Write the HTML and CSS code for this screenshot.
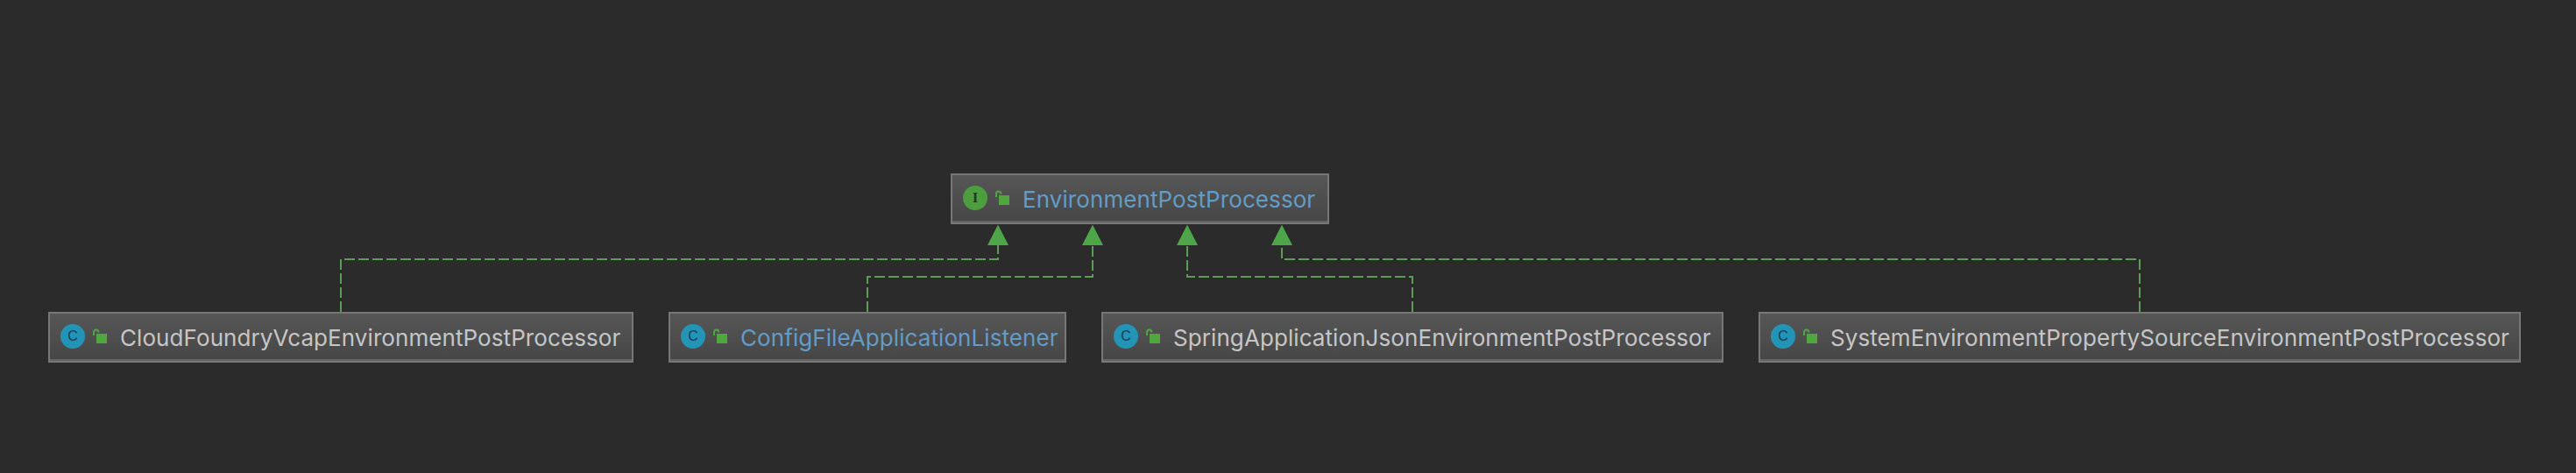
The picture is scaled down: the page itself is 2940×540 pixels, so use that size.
FILE: index.html
```html
<!DOCTYPE html>
<html lang="en">
<head>
<meta charset="utf-8">
<title>EnvironmentPostProcessor</title>
<link rel="stylesheet" href="styles.css">
</head>
<body>
<main class="diagram">
  <svg class="edges" width="2940" height="540" viewBox="0 0 2940 540">
    <g class="edge">
      <path d="M389 356V296H1139V280"/>
      <path d="M990 356V316H1247V280"/>
      <path d="M1612 356V316H1355V280"/>
      <path d="M2442 356V296H1463V280"/>
    </g>
    <g class="head">
      <path d="M1139 256.500L1151 280H1127Z"/>
      <path d="M1247 256.500L1259 280H1235Z"/>
      <path d="M1355 256.500L1367 280H1343Z"/>
      <path d="M1463 256.500L1475 280H1451Z"/>
    </g>
  </svg>
  <div class="top-row">
    <div class="node">
      <span class="badge badge-i">I</span>
      <svg class="lock" width="18" height="18" viewBox="0 0 18 18"><path class="shackle" d="M2 8V4.500C2 2.800 3.200 1.500 4.700 1.500S7.400 2.800 7.400 4.500"/><rect class="body" x="5" y="6" width="12" height="11"/></svg>
      <span class="name link">EnvironmentPostProcessor</span>
    </div>
  </div>
  <div class="bottom-row">
    <div class="node">
      <span class="badge badge-c">C</span>
      <svg class="lock" width="18" height="18" viewBox="0 0 18 18"><path class="shackle" d="M2 8V4.500C2 2.800 3.200 1.500 4.700 1.500S7.400 2.800 7.400 4.500"/><rect class="body" x="5" y="6" width="12" height="11"/></svg>
      <span class="name">CloudFoundryVcapEnvironmentPostProcessor</span>
    </div>
    <div class="node">
      <span class="badge badge-c">C</span>
      <svg class="lock" width="18" height="18" viewBox="0 0 18 18"><path class="shackle" d="M2 8V4.500C2 2.800 3.200 1.500 4.700 1.500S7.400 2.800 7.400 4.500"/><rect class="body" x="5" y="6" width="12" height="11"/></svg>
      <span class="name link">ConfigFileApplicationListener</span>
    </div>
    <div class="node">
      <span class="badge badge-c">C</span>
      <svg class="lock" width="18" height="18" viewBox="0 0 18 18"><path class="shackle" d="M2 8V4.500C2 2.800 3.200 1.500 4.700 1.500S7.400 2.800 7.400 4.500"/><rect class="body" x="5" y="6" width="12" height="11"/></svg>
      <span class="name">SpringApplicationJsonEnvironmentPostProcessor</span>
    </div>
    <div class="node">
      <span class="badge badge-c">C</span>
      <svg class="lock" width="18" height="18" viewBox="0 0 18 18"><path class="shackle" d="M2 8V4.500C2 2.800 3.200 1.500 4.700 1.500S7.400 2.800 7.400 4.500"/><rect class="body" x="5" y="6" width="12" height="11"/></svg>
      <span class="name">SystemEnvironmentPropertySourceEnvironmentPostProcessor</span>
    </div>
  </div>
</main>
</body>
</html>
```
FILE: styles.css
```css
html, body {
  margin: 0;
  padding: 0;
  background: #2b2b2b;
}
.diagram {
  position: relative;
  width: 2940px;
  height: 540px;
  overflow: hidden;
  font-family: "Inter", "Liberation Sans", sans-serif;
}
.edges {
  position: absolute;
  left: 0;
  top: 0;
}
.edge path {
  fill: none;
  stroke: #5c9c56;
  stroke-width: 2;
  stroke-dasharray: 12 4;
}
.head path {
  fill: #4fa648;
}
.top-row {
  display: grid;
  grid-template-columns: 432px;
  padding: 198px 0 0 1085px;
}
.bottom-row {
  display: grid;
  grid-template-columns: 668px 454px 710px 870px;
  column-gap: 40px;
  padding: 100px 0 0 55px;
}
.node {
  position: relative;
  box-sizing: border-box;
  display: flex;
  align-items: center;
  height: 58px;
  padding: 0 0 2px 12px;
  border: 2px solid #777;
  background: linear-gradient(#565656, #464646);
  box-shadow: inset 0 -2px 0 #646464;
  white-space: nowrap;
}
.badge {
  flex: none;
  display: flex;
  align-items: center;
  justify-content: center;
  width: 28px;
  height: 28px;
  border-radius: 50%;
}
.badge-i {
  background: #4c9e3f;
  color: #1f3a1c;
  font-family: "Liberation Serif", serif;
  font-size: 17px;
  font-weight: 700;
}
.badge-c {
  background: #2394b6;
  color: #123f5c;
  font-family: "Liberation Sans", sans-serif;
  font-size: 16px;
}
.lock {
  flex: none;
  margin-left: 8px;
}
.shackle {
  fill: none;
  stroke: #4fa83d;
  stroke-width: 2;
}
.body {
  fill: #4fa83d;
}
.name {
  margin-left: 14px;
  padding-top: 2px;
  font-size: 26px;
  letter-spacing: 0.08px;
  color: #c6c6c6;
}
.link {
  color: #639cc8;
}
```
